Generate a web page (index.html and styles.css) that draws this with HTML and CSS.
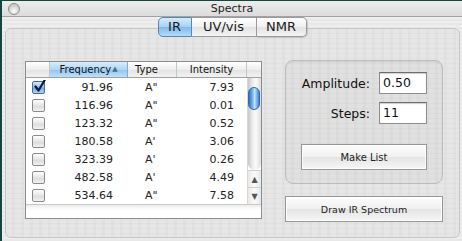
FILE: index.html
```html
<!DOCTYPE html>
<html lang="en">
<head>
    <meta charset="UTF-8">
    <title>Spectra</title>
    <link rel="stylesheet" href="styles.css">
</head>
<body>
    <div class="window">
        <div class="titlebar">
            <span class="close"></span>
            <span class="title">Spectra</span>
        </div>
        <div class="content">
            <div class="tabs">
                <span class="tab active">IR</span>
                <span class="tab">UV/vis</span>
                <span class="tab">NMR</span>
            </div>
            <div class="panel">
                <div class="table">
                    <div class="thead">
                        <div class="th"></div>
                        <div class="th sorted">Frequency<span class="sort">&#9650;</span></div>
                        <div class="th left">Type</div>
                        <div class="th">Intensity</div>
                        <div class="th"></div>
                    </div>
                    <div class="tbody">
                        <div class="rows">
                            <div class="row"><span class="cell"><i class="check on"><svg width="13" height="13" viewBox="0 0 13 13"><path d="M2.5 6.5L5.5 10.5L11.5 0.5" fill="none" stroke="#0a1a3a" stroke-width="2.2" stroke-linecap="round" stroke-linejoin="round"/></svg></i></span><span class="cell num">91.96</span><span class="cell type">A"</span><span class="cell num int">7.93</span></div>
                            <div class="row"><span class="cell"><i class="check"></i></span><span class="cell num">116.96</span><span class="cell type">A"</span><span class="cell num int">0.01</span></div>
                            <div class="row"><span class="cell"><i class="check"></i></span><span class="cell num">123.32</span><span class="cell type">A"</span><span class="cell num int">0.52</span></div>
                            <div class="row"><span class="cell"><i class="check"></i></span><span class="cell num">180.58</span><span class="cell type">A'</span><span class="cell num int">3.06</span></div>
                            <div class="row"><span class="cell"><i class="check"></i></span><span class="cell num">323.39</span><span class="cell type">A'</span><span class="cell num int">0.26</span></div>
                            <div class="row"><span class="cell"><i class="check"></i></span><span class="cell num">482.58</span><span class="cell type">A'</span><span class="cell num int">4.49</span></div>
                            <div class="row"><span class="cell"><i class="check"></i></span><span class="cell num">534.64</span><span class="cell type">A"</span><span class="cell num int">7.58</span></div>
                        </div>
                        <div class="scrollbar">
                            <div class="track"><div class="thumb"></div></div>
                            <div class="arrow">&#9650;</div>
                            <div class="arrow">&#9660;</div>
                        </div>
                    </div>
                    <div class="tfoot"></div>
                </div>

                <div class="side">
                    <div class="group">
                        <div class="field">
                            <label>Amplitude:</label>
                            <span class="input">0.50</span>
                        </div>
                        <div class="field">
                            <label>Steps:</label>
                            <span class="input">11</span>
                        </div>
                        <button class="btn make">Make List</button>
                    </div>
                    <button class="btn draw">Draw IR Spectrum</button>
                </div>
            </div>
        </div>
    </div>
</body>
</html>
```

FILE: styles.css
```css
* {
    margin: 0;
    padding: 0;
    box-sizing: border-box;
}

body {
    width: 462px;
    height: 241px;
    overflow: hidden;
    background: #ececec;
    font-family: 'DejaVu Sans', 'Open Sans', sans-serif;
    color: #111;
}

.window {
    height: 241px;
    border-top: 1px solid #16443f;
    border-left: 2px solid #16443f;
    background-color: #ededed;
    background-image: repeating-linear-gradient(to bottom, #eeeeee 0 2px, #e8e8e8 2px 4px);
}

/* title bar */
.titlebar {
    height: 16px;
    border-bottom: 1px solid #a2a2a2;
    background: linear-gradient(#ececec, #dcdcdc);
    display: flex;
    align-items: center;
    justify-content: center;
    position: relative;
}

.titlebar .close {
    position: absolute;
    left: 6px;
    top: 2px;
    width: 12px;
    height: 12px;
    border-radius: 50%;
    border: 1px solid #8e8e8e;
    background: radial-gradient(circle at 50% 70%, #ffffff, #c8c8c8 70%);
}

.titlebar .title {
    font-size: 11px;
    color: #222;
}

/* tabs */
.content {
    display: flex;
    flex-direction: column;
}

.tabs {
    display: flex;
    justify-content: center;
    position: relative;
    z-index: 2;
    height: 20px;
}

.tab {
    height: 20px;
    font-size: 13px;
    line-height: 18px;
    text-align: center;
    border: 1px solid #9a9a9a;
    border-left: none;
    background: linear-gradient(#ffffff, #f0f0f0 50%, #e2e2e2 51%, #f4f4f4);
    color: #1a1a1a;
}

.tab:nth-child(1) { width: 34px; border-left: 1px solid #8a8a8a; border-radius: 5px 0 0 5px; }
.tab:nth-child(2) { width: 65px; }
.tab:nth-child(3) { width: 50px; border-radius: 0 5px 5px 0; box-shadow: 1px 1px 1px rgba(0, 0, 0, 0.15); }

.tab.active {
    background: linear-gradient(#d4eafc, #a7d0f4 50%, #7fb9ec 51%, #b4dcfa);
    border-color: #5b86b0;
}

/* panel */
.panel {
    margin: -9px 0 0 3px;
    width: 455px;
    height: 210px;
    border: 1px solid #c6c6c6;
    border-radius: 6px;
    background-color: #e6e6e6;
    background-image:
        repeating-linear-gradient(to right, transparent 0 6px, rgba(0, 0, 0, 0.025) 6px 9px),
        repeating-linear-gradient(to bottom, transparent 0 4px, rgba(0, 0, 0, 0.02) 4px 5px);
    display: flex;
    align-items: flex-start;
    padding: 32px 0 0 19px;
}

/* table */
.table {
    width: 237px;
    height: 158px;
    border: 1px solid #8c8c8c;
    background: #fff;
    display: flex;
    flex-direction: column;
}

.thead {
    display: grid;
    grid-template-columns: 24px 78px 49px 70px 14px;
    height: 16px;
    border-bottom: 1px solid #a0a0a0;
}

.th {
    font-size: 10px;
    line-height: 15px;
    text-align: center;
    border-right: 1px solid #c4c4c4;
    background: linear-gradient(#ffffff, #eeeeee 50%, #e2e2e2 51%, #f2f2f2);
    color: #111;
}

.th:last-child {
    border-right: none;
}

.th.left {
    text-align: left;
    padding-left: 7px;
}

.th.sorted {
    background: linear-gradient(#d8ecfc, #b0d6f6 50%, #8fc4f0 51%, #bfe0fa);
    border-right-color: #86aacb;
}

.th .sort {
    font-size: 7px;
    color: #4a6a8a;
    margin-left: 1px;
    vertical-align: 2px;
}

.tbody {
    display: flex;
    height: 126px;
}

.rows {
    width: 221px;
}

.row {
    display: grid;
    grid-template-columns: 24px 78px 49px 70px;
    height: 18px;
    align-items: center;
    font-size: 11px;
    color: #222;
}

.cell.num {
    text-align: right;
    padding-right: 15px;
}

.cell.int {
    padding-right: 13px;
}

.cell.type {
    padding-left: 17px;
}

.check {
    display: block;
    width: 13px;
    height: 13px;
    margin-left: 6px;
    border: 1px solid #8a8a8a;
    border-radius: 2px;
    background: linear-gradient(#ffffff, #e4e4e4 50%, #d8d8d8 51%, #f2f2f2);
    position: relative;
}

.check.on {
    border-color: #4a6f96;
    background: linear-gradient(#cfe6fb, #8fc0ec 50%, #6aa8e2 51%, #aad4f6);
}

.check svg {
    position: absolute;
    left: 0;
    top: -2px;
}

.scrollbar {
    width: 14px;
    border-left: 1px solid #d8d8d8;
    display: flex;
    flex-direction: column;
}

.track {
    height: 92px;
    border-radius: 0 0 7px 7px;
    background: linear-gradient(to right, #c6c6c6, #ededed 35%, #fbfbfb 60%, #dcdcdc);
    padding-top: 9px;
}

.thumb {
    width: 12px;
    height: 23px;
    margin-left: 0;
    border-radius: 6px;
    border: 1px solid #2f68b0;
    background: linear-gradient(to right, #2f6fc2, #8ec8f8 45%, #c4e4fc 55%, #3f82d2);
}

.arrow {
    height: 17px;
    font-size: 8px;
    line-height: 17px;
    text-align: center;
    color: #555;
    border-top: 1px solid #cfcfcf;
    background: linear-gradient(to right, #e8e8e8, #fafafa 50%, #e6e6e6);
}

.tfoot {
    flex: 1;
    border-top: 1px solid #c8c8c8;
    background: linear-gradient(#ececec, #ffffff 5px);
}

/* side controls */
.side {
    margin: -1px 0 0 23px;
    width: 158px;
    display: flex;
    flex-direction: column;
}

.group {
    height: 124px;
    border: 1px solid #bcbcbc;
    border-radius: 8px;
    background: rgba(0, 0, 0, 0.025);
    box-shadow: inset 0 1px 2px rgba(0, 0, 0, 0.08);
    padding: 11px 15px 0 15px;
    display: flex;
    flex-direction: column;
    gap: 8px;
}

.field {
    display: flex;
    justify-content: flex-end;
    align-items: center;
    gap: 9px;
}

.field label {
    font-size: 12.5px;
    color: #111;
}

.input {
    width: 48px;
    height: 22px;
    background: #fff;
    border: 1px solid #8e8e8e;
    border-top-color: #6e6e6e;
    box-shadow: inset 0 1px 1px rgba(0, 0, 0, 0.2);
    font-size: 12.5px;
    line-height: 20px;
    padding-left: 3px;
}

.btn {
    font-family: inherit;
    font-size: 10px;
    color: #222;
    height: 26px;
    border: 1px solid #979797;
    background: linear-gradient(#fdfdfd, #f0f0f0 50%, #e4e4e4 51%, #f6f6f6);
    box-shadow: inset 0 0 0 1px rgba(255, 255, 255, 0.8);
}

.btn.make {
    margin-top: 12px;
    width: 126px;
}

.btn.draw {
    margin-top: 12px;
    width: 158px;
    font-size: 9.5px;
}
```
